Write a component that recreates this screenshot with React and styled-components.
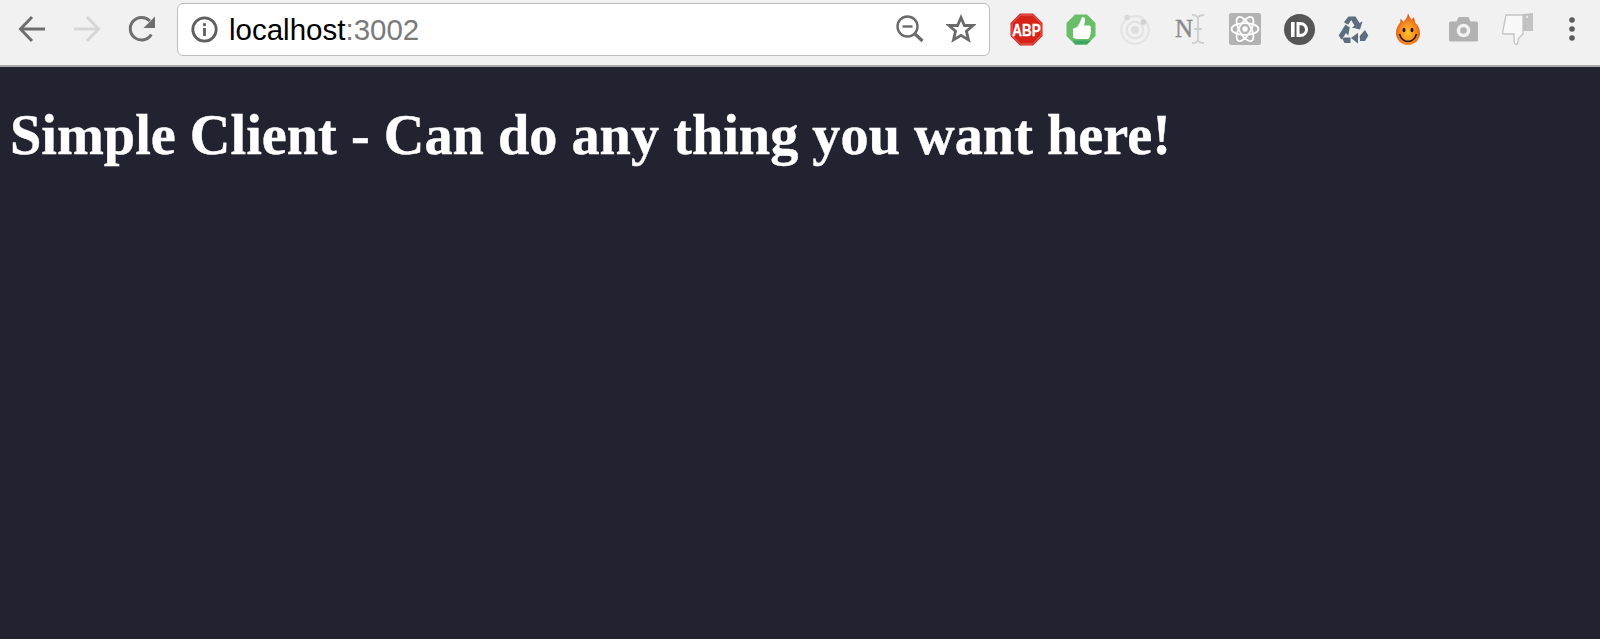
import React from 'react';
import styled, { createGlobalStyle } from 'styled-components';

const GlobalStyle = createGlobalStyle`
  html, body {
    margin: 0;
    padding: 0;
    height: 100%;
    background-color: #212330;
  }
  #root {
    height: 100%;
  }
`;

const Page = styled.div`
  display: flex;
  flex-direction: column;
  height: 639px;
  overflow: hidden;
  background-color: #212330;
`;

const Toolbar = styled.div`
  display: flex;
  flex-direction: row;
  align-items: center;
  flex-shrink: 0;
  height: 65px;
  padding-left: 4px;
  background-color: #f1f1f1;
  border-bottom: 2px solid #a9a9a9;
`;

const Row = styled.div`
  display: flex;
  flex-direction: row;
  align-items: center;
  height: 58px;
  margin-bottom: 7px;
`;

const NavButton = styled.div`
  display: flex;
  justify-content: center;
  align-items: center;
  width: 55px;
  height: 40px;
`;

const Omnibox = styled.div`
  display: flex;
  flex-direction: row;
  align-items: center;
  box-sizing: border-box;
  width: 813px;
  height: 53px;
  margin-left: 8px;
  padding: 0 12px 0 13px;
  background-color: white;
  border: 1px solid #bdbdbd;
  border-radius: 6px;
`;

const Url = styled.div`
  flex: 1;
  margin-left: 11px;
  padding-top: 2px;
  font-family: 'Liberation Sans', Arial, sans-serif;
  font-size: 29.5px;
  color: #000;
  white-space: nowrap;
  span {
    color: #7a7a7a;
  }
`;

const BoxIcon = styled.div`
  display: flex;
  justify-content: center;
  align-items: center;
  width: 32px;
  height: 32px;
  margin-left: ${(props) => props.gap || 0}px;
`;

const Extensions = styled.div`
  display: flex;
  flex-direction: row;
  margin-left: 9px;
`;

const ExtSlot = styled.div`
  display: flex;
  justify-content: center;
  align-items: center;
  width: 54.6px;
  height: 40px;
`;

const Heading = styled.h1`
  margin: 36px 0 0 10px;
  font-family: 'Liberation Serif', 'Times New Roman', serif;
  font-size: 56.3px;
  font-weight: bold;
  line-height: 64px;
  color: white;
  white-space: nowrap;
  -webkit-text-stroke: 0.4px white;
`;

const BackIcon = ({ color }) => (
  <svg width="28" height="28" viewBox="0 0 28 28" fill="none" stroke={color} strokeWidth="3">
    <path d="M27 14H3" />
    <path d="M14 2 2.500 14 14 26" />
  </svg>
);

const ForwardIcon = ({ color }) => (
  <svg width="28" height="28" viewBox="0 0 28 28" fill="none" stroke={color} strokeWidth="3">
    <path d="M1 14h24" />
    <path d="M14 2l11.500 12L14 26" />
  </svg>
);

const ReloadIcon = () => (
  <svg width="28" height="28" viewBox="0 0 28 28" fill="none">
    <path d="M23.300 19.500A11.300 11.300 0 1 1 21.800 6" stroke="#6e6e6e" strokeWidth="3" />
    <path d="M27 1.500V13H15.500z" fill="#6e6e6e" />
  </svg>
);

const InfoIcon = () => (
  <svg width="27" height="27" viewBox="0 0 27 27" fill="none">
    <circle cx="13.500" cy="13.500" r="11.700" stroke="#5f5f5f" strokeWidth="2.800" />
    <rect x="12.100" y="12" width="2.800" height="8" fill="#5f5f5f" />
    <rect x="12.100" y="7.200" width="2.800" height="2.900" fill="#5f5f5f" />
  </svg>
);

const ZoomOutIcon = () => (
  <svg width="28" height="28" viewBox="0 0 28 28" fill="none" stroke="#6a6a6a">
    <circle cx="11.500" cy="11.500" r="10" strokeWidth="2.400" />
    <path d="M6.500 11.500h10" strokeWidth="2.400" />
    <path d="M18.500 18.500l8 7.500" strokeWidth="3.200" />
  </svg>
);

const StarIcon = () => (
  <svg width="30" height="30" viewBox="0 0 30 30" fill="none" stroke="#6a6a6a" strokeWidth="2.800">
    <path d="M15 3.500l3.400 8h8.600l-6.600 5.700 2.100 8.700L15 21.300l-7.500 4.600 2.100-8.700L3 11.500h8.600z" />
  </svg>
);

const AbpIcon = () => (
  <svg width="33" height="33" viewBox="0 0 33 33">
    <path d="M10 .5h13L32.500 10v13L23 32.500H10L.5 23V10z" fill="#d5231a" />
    <path d="M10.500 2h12L31 10.500v12L22.500 31h-12L2 22.500v-12z" fill="none" stroke="#e8675f" strokeWidth="1" />
    <text transform="translate(16.500 22.500) scale(0.84 1)" textAnchor="middle" fontFamily="'Liberation Sans', Arial, sans-serif" fontWeight="bold" fontSize="16" fill="white" stroke="white" strokeWidth="0.300">ABP</text>
  </svg>
);

const ThumbIcon = () => (
  <svg width="30" height="31" viewBox="0 0 30 31">
    <path d="M9 .5h12L29.500 9v13L21 30.500H9L.5 22V9z" fill="#68bf68" />
    <path d="M9 30.500h12l4-4H7z" fill="#3fa562" />
    <path d="M7 14.500c2.500 0 4.300-1.500 5.500-3.500 1.500-2.500 2.300-4.500 3-7 .4-1.500 3.300-1.300 3.500 1.500.2 2.200-.6 4-1 6h5c2 0 2.300 2 1.500 3.500.8 1 .8 2.500 0 3.500.4 1.200.2 2.400-.7 3.200.2 1.800-.8 3.300-2.800 3.300H12c-2 0-3.500-1-5-1.300z" fill="white" />
  </svg>
);

const RingIcon = () => (
  <svg width="32" height="32" viewBox="0 0 32 32" fill="none">
    <circle cx="16" cy="17" r="13.800" stroke="#e4e4e4" strokeWidth="2.200" />
    <circle cx="16" cy="17" r="8.300" stroke="#e2e2e2" strokeWidth="2.200" />
    <circle cx="16" cy="17" r="4" fill="#dedede" />
    <circle cx="8" cy="4.500" r="2.800" fill="#d8d8d8" />
    <circle cx="24.500" cy="9" r="2.800" fill="#d2d2d2" />
  </svg>
);

const NotedIcon = () => (
  <svg width="30" height="32" viewBox="0 0 30 32" fill="none">
    <text x="0" y="24" fontFamily="'Liberation Serif', 'Times New Roman', serif" fontSize="25" fill="#8a8a8a" stroke="#8a8a8a" strokeWidth="0.400">N</text>
    <path d="M17 2c4 0 5.500 1 6 3 .5-2 2-3 6-3M23 5v22M17 30c4 0 5.500-1 6-3 .5 2 2 3 6 3M19 16h8" stroke="#cfcfcf" strokeWidth="1.800" />
  </svg>
);

const ReactIcon = () => (
  <svg width="32" height="32" viewBox="0 0 32 32" fill="none">
    <rect width="32" height="32" rx="2" fill="#b3b3b3" />
    <g stroke="white" strokeWidth="1.800">
      <ellipse cx="16" cy="16" rx="13.500" ry="5.800" />
      <ellipse cx="16" cy="16" rx="13.500" ry="5.800" transform="rotate(60 16 16)" />
      <ellipse cx="16" cy="16" rx="13.500" ry="5.800" transform="rotate(120 16 16)" />
    </g>
    <circle cx="16" cy="16" r="2.800" fill="white" />
  </svg>
);

const PinboardIcon = () => (
  <svg width="31" height="31" viewBox="0 0 31 31">
    <circle cx="15.500" cy="15.500" r="15.500" fill="#565656" />
    <rect x="7" y="8" width="3.600" height="15" fill="white" />
    <path d="M12.500 8h4a7.500 7.500 0 0 1 0 15h-4z" fill="white" />
    <path d="M15.500 11.200h1.200a4.300 4.300 0 0 1 0 8.600h-1.200z" fill="#565656" />
  </svg>
);

const RecycleIcon = () => (
  <svg width="31" height="31" viewBox="0 0 31 31" fill="#5b6d7e">
    <path d="M10.500 2.500h7l4 6.500 3-1.700-2.500 8.200-8.300-2 2.900-1.700-3.400-5.800-3 4.800-4.300-2.500z" />
    <path d="M7.500 10.500 10 12.500l1.800.5-1.500 8.500-2.300-2.600L5.500 23l-2.200 2.500L.7 21.500z" />
    <path d="M27 16l3.300 5.500-3.300 5.500h-5l-.3-5zM20 22v-3.300L13 24l7 5.500V27z" />
    <path d="M4 24l3-.5h5.500V29H6.500z" />
  </svg>
);

const HolaIcon = () => (
  <svg width="24" height="32" viewBox="0 0 24 32">
    <defs>
      <radialGradient id="holaFace" cx="0.5" cy="0.62" r="0.55">
        <stop offset="0" stopColor="#fdc32f" />
        <stop offset="0.6" stopColor="#f58a1f" />
        <stop offset="1" stopColor="#e0521b" />
      </radialGradient>
    </defs>
    <path d="M12 0c1 3.500 2.500 5 3.800 6.800.7-.8 1.300-1.600 1.500-2.800 1.200 1.800 1.700 3.500 1.700 5.500 2.800 2.500 5 6 5 10.500C24 27 18.500 32 12 32S0 27 0 20c0-4 1.500-7.500 4-10.300.5-1.500.5-2.700.3-4 1.500.8 2.400 1.800 3 3C9.800 6.500 11.800 3.800 12 0z" fill="url(#holaFace)" />
    <ellipse cx="8" cy="17" rx="1.500" ry="2.300" fill="#2a1606" />
    <ellipse cx="16" cy="17" rx="1.500" ry="2.300" fill="#2a1606" />
    <path d="M3.500 21c1.500 5 5 7.500 8.500 7.500s7-2.500 8.500-7.500" fill="none" stroke="#2a1606" strokeWidth="1.500" />
  </svg>
);

const CameraIcon = () => (
  <svg width="29" height="26" viewBox="0 0 29 26">
    <path d="M1.500 5.500h6L9.500 1h10l2 4.500h6a1.500 1.500 0 0 1 1.500 1.500v17a1.500 1.500 0 0 1-1.500 1.500h-26A1.500 1.500 0 0 1 0 24V7a1.500 1.500 0 0 1 1.500-1.500z" fill="#b2b2b2" />
    <circle cx="14.500" cy="14.500" r="6.800" fill="#f1f1f1" />
    <circle cx="14.500" cy="14.500" r="3.300" fill="#b2b2b2" />
  </svg>
);

const DislikeIcon = () => (
  <svg width="32" height="32" viewBox="0 0 32 32">
    <path d="M4 2h17v19l-4.500 4.500-1 5.500c-1.500.6-3 .2-3.300-1.500l-.2-8.500H2c-1 0-1.500-.6-1.300-1.700z" fill="#f8f8f8" stroke="#c4c4c4" strokeWidth="1.300" />
    <path d="M21 1l10-1v18H21z" fill="#c2c2c2" />
    <circle cx="25" cy="4" r="1.100" fill="#f0f0f0" />
  </svg>
);

const MenuIcon = () => (
  <svg width="6" height="28" viewBox="0 0 6 28" fill="#5c5c5c">
    <circle cx="3" cy="5" r="2.800" />
    <circle cx="3" cy="14" r="2.800" />
    <circle cx="3" cy="23" r="2.800" />
  </svg>
);

const extensions = [
  AbpIcon, ThumbIcon, RingIcon, NotedIcon, ReactIcon, PinboardIcon,
  RecycleIcon, HolaIcon, CameraIcon, DislikeIcon, MenuIcon,
];

const App = () => (
  <Page>
    <GlobalStyle />
    <Toolbar>
      <Row>
        <NavButton><BackIcon color="#6e6e6e" /></NavButton>
        <NavButton><ForwardIcon color="#d6d6d6" /></NavButton>
        <NavButton><ReloadIcon /></NavButton>
        <Omnibox>
          <InfoIcon />
          <Url>localhost<span>:3002</span></Url>
          <BoxIcon><ZoomOutIcon /></BoxIcon>
          <BoxIcon gap={19}><StarIcon /></BoxIcon>
        </Omnibox>
        <Extensions>
          {extensions.map((Icon, index) => (
            <ExtSlot key={index}><Icon /></ExtSlot>
          ))}
        </Extensions>
      </Row>
    </Toolbar>
    <Heading>Simple Client - Can do any thing you want here!</Heading>
  </Page>
);

export default App;
